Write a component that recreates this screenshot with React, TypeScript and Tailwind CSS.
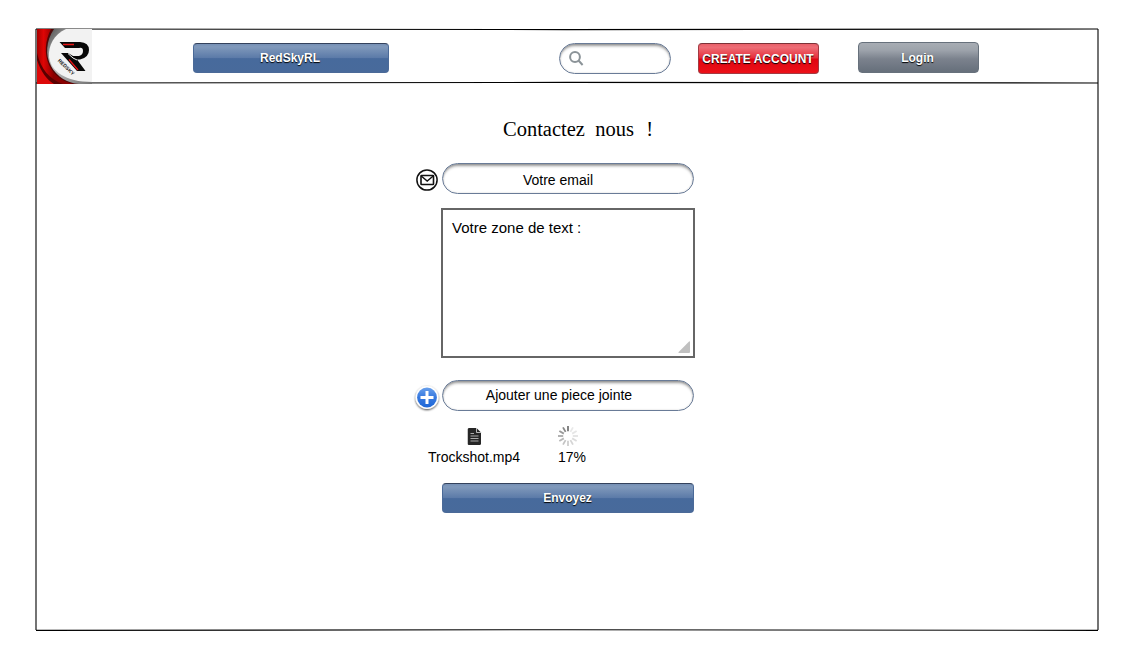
import type { ReactNode } from 'react';

function GlossButton({ className, children }: { className: string; children: ReactNode }) {
  return (
    <button
      className={`flex items-center justify-center whitespace-nowrap rounded-[4px] border text-[12px] leading-[14px] font-bold text-white [text-shadow:0_1px_1px_#000] ${className}`}
    >
      {children}
    </button>
  );
}

const BLUE =
  'border-[#4b6a98] border-t-[#34425c] bg-[linear-gradient(to_bottom,#7690b5_0%,#8099bb_10%,#5b7aa8_50%,#476a9c_52%,#486a9b_100%)]';
const PILL =
  'rounded-full border border-[#697b97] bg-white shadow-[inset_0_3px_3px_-1px_rgba(0,0,0,0.4),inset_0_0_2px_rgba(0,0,0,0.2)]';

function SketchLines() {
  return (
    <svg
      width="1064"
      height="603"
      viewBox="0 0 1064 603"
      fill="none"
      stroke="#000"
      strokeWidth="1.1"
      className="pointer-events-none absolute -top-[2px] -left-[2px]"
    >
      <path d="M1 1Q532 2.2 1063 1" />
      <path d="M1 55Q532 53.8 1063 55" />
      <path d="M1 1V602" />
      <path d="M1063 1Q1064 301 1063 602" />
      <path d="M1 602.4Q532 601 1063 602.4" />
    </svg>
  );
}

function Logo() {
  return (
    <svg width="55" height="55" viewBox="0 0 55 55" className="relative z-10 -mt-px block shrink-0">
      <defs>
        <linearGradient id="red" x1="0" x2="1" y1="0" y2="0">
          <stop offset="0" stopColor="#a80000" />
          <stop offset=".12" stopColor="#e00505" />
          <stop offset=".3" stopColor="#8a0000" />
        </linearGradient>
        <linearGradient id="rim" x1="0" x2="1" y1="0" y2="1">
          <stop offset="0" stopColor="#4a4a4a" />
          <stop offset=".4" stopColor="#c4c4c4" />
          <stop offset="1" stopColor="#707070" />
        </linearGradient>
      </defs>
      <rect width="55" height="55" fill="url(#red)" />
      <path d="M14 0C8 12 7 24 12 36C18 48 28 54 38 55H55V0z" fill="#4e0808" />
      <path d="M17 0C9 12 8 26 14 37C20 48 30 54 42 55H55V0z" fill="url(#rim)" />
      <path d="M55 0H29C17 5 11 17 12 28C14 42 28 53 55 53z" fill="#f2f2f2" />
      <path d="M0 24C4 40 12 50 26 55H0z" fill="#5a0000" />
      <path d="M0 31C4 43 10 51 17 55H0z" fill="#dd0909" />
      <path d="M22.500 13H43Q52 13.500 52 21T43 30.500H40L48.500 42H40L24 24H31L36 27H42Q46 26 46 22T42 19H28z" fill="#080808" />
      <path d="M31 24.500L36 29L40 31" stroke="#f2f2f2" strokeWidth="1" fill="none" />
      <path d="M26 15.500H37M32 30.500L41 41" stroke="#e81414" strokeWidth="1.3" />
      <text x="20.500" y="32" transform="rotate(44 20.500 32)" fontFamily="Liberation Sans" fontSize="5" fontWeight="bold" fill="#222">REDSKY</text>
    </svg>
  );
}

function MailIcon() {
  return (
    <svg width="22" height="22" viewBox="0 0 22 22" fill="none" stroke="#111">
      <circle cx="11" cy="11" r="10.1" strokeWidth="1.5" />
      <rect x="5" y="6.5" width="12.5" height="9" rx=".6" strokeWidth="1.6" />
      <path d="M5.2 7L11.2 12L17.2 7" strokeWidth="1.4" />
    </svg>
  );
}

function PlusIcon() {
  return (
    <svg width="28" height="28" viewBox="0 0 28 28" className="-ml-px block w-[28px] max-w-none translate-x-px">
      <defs>
        <linearGradient id="plus" x1="0" x2="0" y1="0" y2="1">
          <stop offset="0" stopColor="#69a0ec" />
          <stop offset=".5" stopColor="#3678de" />
          <stop offset="1" stopColor="#1f68d8" />
        </linearGradient>
        <filter id="drop" x="-20%" y="-20%" width="140%" height="140%">
          <feDropShadow dx="0" dy="1" stdDeviation="1.1" floodColor="#000" floodOpacity=".75" />
        </filter>
      </defs>
      <circle cx="14" cy="13.5" r="11.4" fill="#fff" filter="url(#drop)" />
      <circle cx="14" cy="13.500" r="9.900" fill="url(#plus)" />
      <path d="M14 7V20M7.5 13.5H20.5" stroke="#fff" strokeWidth="3" />
    </svg>
  );
}

function FileIcon() {
  return (
    <svg width="14" height="17" viewBox="0 0 14 17" className="translate-x-[0.5px]">
      <path d="M1.5 0H9L13.500 4.500V15.5Q13.500 17 12 17H1.5Q0 17 0 15.5V1.5Q0 0 1.5 0Z" fill="#262626" />
      <path d="M9 0V4.500H13.500" fill="none" stroke="#ddd" strokeWidth=".8" />
      <path d="M3 5.500H6.500M3 8H11M3 10.500H11M3 13H11" stroke="#aaa" strokeWidth="1" />
    </svg>
  );
}

const SPOKES = ['#777', '#e9e9e9', '#e6e6e6', '#e2e2e2', '#dcdcdc', '#d5d5d5', '#cecece', '#c4c4c4', '#b8b8b8', '#aaa', '#999', '#888'];

function Spinner() {
  return (
    <svg width="20" height="20" viewBox="0 0 20 20">
      {SPOKES.map((color, i) => (
        <path key={i} d="M10 0V5.2" stroke={color} strokeWidth="1.8" transform={`rotate(${i * 30} 10 10)`} />
      ))}
    </svg>
  );
}

export default function App() {
  return (
    <div className="h-[648px] w-[1144px] bg-white pt-[28px] pl-[35px] font-['Liberation_Sans',Arial,sans-serif] text-black">
      <div className="relative h-[603px] w-[1064px] border-2 border-transparent">
        <SketchLines />
        <header className="flex h-[54px] items-start">
          <Logo />
          <GlossButton className={`mt-[13px] ml-[101px] h-[30px] w-[196px] pr-[2px] ${BLUE}`}>RedSkyRL</GlossButton>
          <div className={`mt-[13px] ml-[170px] h-[31px] w-[112px] pt-[7px] pl-[9px] ${PILL}`}>
            <svg width="15" height="15" viewBox="0 0 15 15" fill="none" stroke="#8b9398" strokeWidth="2">
              <circle cx="6" cy="6" r="4.9" />
              <path d="M9.5 9.5L13.6 14" strokeWidth="2" />
            </svg>
          </div>
          <GlossButton className="mt-[13px] ml-[27px] h-[31px] w-[121px] border-[#a33a42] border-t-[#7d3238] bg-[linear-gradient(to_bottom,#e9606a_0%,#ed6d76_12%,#e62e3a_48%,#df0511_52%,#ec1018_100%)] pr-[1px]">
            CREATE ACCOUNT
          </GlossButton>
          <GlossButton className="mt-[12px] ml-[39px] h-[31px] w-[121px] border-[#67717c] bg-[linear-gradient(to_bottom,#a8adb4_0%,#9da3ab_25%,#7b828d_55%,#666f7b_100%)] pr-[2px]">
            Login
          </GlossButton>
        </header>

        <main className="ml-[376px] w-[284px]">
          <h1 className="mt-[33px] ml-[90px] h-[24px] whitespace-pre font-['Liberation_Serif',serif] text-[20.5px] leading-[24px]">
            Contactez{'  '}nous{'  '}<span className="pl-[2px]">!</span>
          </h1>

          <div className="mt-[22px] flex">
            <div className="w-[29px] pt-[6px] pl-[3px]"><MailIcon /></div>
            <div className={`flex h-[31px] w-[252px] justify-center pt-[8px] text-[14px] leading-[16px] ${PILL} pr-[20px]`}>Votre email</div>
          </div>

          <div className="mt-[14px] ml-[28px] flex h-[150px] w-[254px] flex-col justify-between border-2 border-[#666] pt-[9px] pr-[3px] pb-[3px] pl-[9px] text-[15px] leading-[17px]">
            <span>Votre zone de text :</span>
            <svg width="12" height="12" viewBox="0 0 13 13" className="self-end">
              <path d="M12 .5Q13 0 13 1V12Q13 13 12 13H1Q0 13 .7 12Z" fill="#c0c0c0" />
            </svg>
          </div>

          <div className="mt-[22px] flex">
            <div className="w-[29px] pt-[4px]"><PlusIcon /></div>
            <div className={`flex h-[31px] w-[252px] justify-center pt-[6px] text-[14px] leading-[16px] ${PILL} pr-[18px]`}>Ajouter une piece jointe</div>
          </div>

          <div className="mt-[14px] ml-[14px] flex h-[40px] gap-[37px] text-[14px] leading-[16px]">
            <div className="flex w-[94px] flex-col items-center pt-[2px]">
              <FileIcon />
              <span className="mt-[4px]">Trockshot.mp4</span>
            </div>
            <div className="flex flex-col">
              <Spinner />
              <span className="mt-[3px]">17%</span>
            </div>
          </div>

          <GlossButton className={`mt-[17px] ml-[29px] h-[30px] w-[252px] pr-[1px] ${BLUE}`}>Envoyez</GlossButton>
        </main>
      </div>
    </div>
  );
}
